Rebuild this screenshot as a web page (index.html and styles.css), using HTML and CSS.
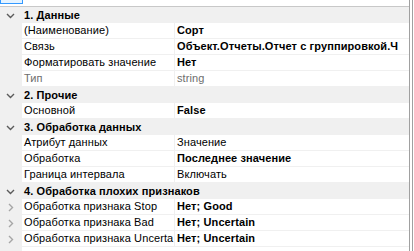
FILE: index.html
```html
<!DOCTYPE html>
<html>
<head>
<meta charset="utf-8">
<link rel="stylesheet" href="styles.css">
</head>
<body>
<div class="frame">
  <div class="grid">
    <div class="toolbar"><span class="tbtn"></span></div>
    <div class="rows">
      <div class="row cat">
        <span class="margin"><svg class="chev" width="9" height="6" viewBox="0 0 9 6"><path d="M1 1 L4.5 4.5 L8 1" fill="none" stroke="#5b5b5b" stroke-width="1.4"/></svg></span>
        <span class="cname">1. Данные</span>
      </div>
      <div class="row"><span class="margin"></span><span class="name">(Наименование)</span><span class="val b">Сорт</span></div>
      <div class="row"><span class="margin"></span><span class="name">Связь</span><span class="val b">Объект.Отчеты.Отчет с группировкой.Ч</span></div>
      <div class="row"><span class="margin"></span><span class="name">Форматировать значение</span><span class="val b">Нет</span></div>
      <div class="row ro"><span class="margin"></span><span class="name">Тип</span><span class="val">string</span></div>
      <div class="row cat">
        <span class="margin"><svg class="chev" width="9" height="6" viewBox="0 0 9 6"><path d="M1 1 L4.5 4.5 L8 1" fill="none" stroke="#5b5b5b" stroke-width="1.4"/></svg></span>
        <span class="cname">2. Прочие</span>
      </div>
      <div class="row"><span class="margin"></span><span class="name">Основной</span><span class="val b">False</span></div>
      <div class="row cat">
        <span class="margin"><svg class="chev" width="9" height="6" viewBox="0 0 9 6"><path d="M1 1 L4.5 4.5 L8 1" fill="none" stroke="#5b5b5b" stroke-width="1.4"/></svg></span>
        <span class="cname">3. Обработка данных</span>
      </div>
      <div class="row"><span class="margin"></span><span class="name">Атрибут данных</span><span class="val">Значение</span></div>
      <div class="row"><span class="margin"></span><span class="name">Обработка</span><span class="val b">Последнее значение</span></div>
      <div class="row"><span class="margin"></span><span class="name">Граница интервала</span><span class="val">Включать</span></div>
      <div class="row cat">
        <span class="margin"><svg class="chev" width="9" height="6" viewBox="0 0 9 6"><path d="M1 1 L4.5 4.5 L8 1" fill="none" stroke="#5b5b5b" stroke-width="1.4"/></svg></span>
        <span class="cname">4. Обработка плохих признаков</span>
      </div>
      <div class="row"><span class="margin"><svg class="rchev" width="6" height="9" viewBox="0 0 6 9"><path d="M1 1 L4.5 4.5 L1 8" fill="none" stroke="#a6a6a6" stroke-width="1.4"/></svg></span><span class="name">Обработка признака Stop</span><span class="val b">Нет; Good</span></div>
      <div class="row"><span class="margin"><svg class="rchev" width="6" height="9" viewBox="0 0 6 9"><path d="M1 1 L4.5 4.5 L1 8" fill="none" stroke="#a6a6a6" stroke-width="1.4"/></svg></span><span class="name">Обработка признака Bad</span><span class="val b">Нет; Uncertain</span></div>
      <div class="row"><span class="margin"><svg class="rchev" width="6" height="9" viewBox="0 0 6 9"><path d="M1 1 L4.5 4.5 L1 8" fill="none" stroke="#a6a6a6" stroke-width="1.4"/></svg></span><span class="name">Обработка признака Uncerta</span><span class="val b">Нет; Uncertain</span></div>
      <div class="filler"><span class="margin"></span></div>
    </div>
  </div>
  <div class="edge"></div>
</div>
</body>
</html>
```
FILE: styles.css
```css
html, body {
  margin: 0;
  padding: 0;
  background: #ffffff;
  width: 414px;
  height: 251px;
  overflow: hidden;
}
body {
  font-family: "Liberation Sans", Arial, sans-serif;
  font-size: 11px;
  letter-spacing: 0.1px;
  color: #000000;
}
.frame {
  display: flex;
  height: 251px;
}
.grid {
  width: 409px;
  border-right: 1px solid #a0a0a0;
  display: flex;
  flex-direction: column;
}
.edge {
  width: 1px;
  margin-left: 2px;
  background: #a0a0a0;
}
.toolbar {
  height: 6px;
  border-bottom: 1px solid #c8c8c8;
  background: #ffffff;
}
.tbtn {
  display: block;
  width: 21px;
  height: 3px;
  border: 1px solid #3399ff;
  border-top: none;
  background: #e5f3ff;
}
.rows {
  display: flex;
  flex-direction: column;
  flex: 1;
  background: #ffffff;
}
.row {
  display: flex;
  height: 16px;
  line-height: 15px;
}
.margin {
  width: 22px;
  flex: none;
  background: #f0f0f0;
  display: flex;
  align-items: center;
  justify-content: center;
}
.chev {
  margin-left: -1px;
  margin-top: 1px;
}
.name {
  width: 150px;
  flex: none;
  padding-left: 2px;
  border-right: 1px solid #f0f0f0;
  border-bottom: 1px solid #f0f0f0;
  white-space: nowrap;
  overflow: hidden;
}
.val {
  flex: 1;
  padding-left: 2px;
  border-bottom: 1px solid #f0f0f0;
  white-space: nowrap;
  overflow: hidden;
}
.b {
  font-weight: bold;
}
.ro .name, .ro .val {
  color: #6d6d6d;
}
.cat {
  background: #f0f0f0;
}
.cname {
  padding-left: 2px;
  font-weight: bold;
  line-height: 16px;
}
.filler {
  flex: 1;
  display: flex;
}
```
